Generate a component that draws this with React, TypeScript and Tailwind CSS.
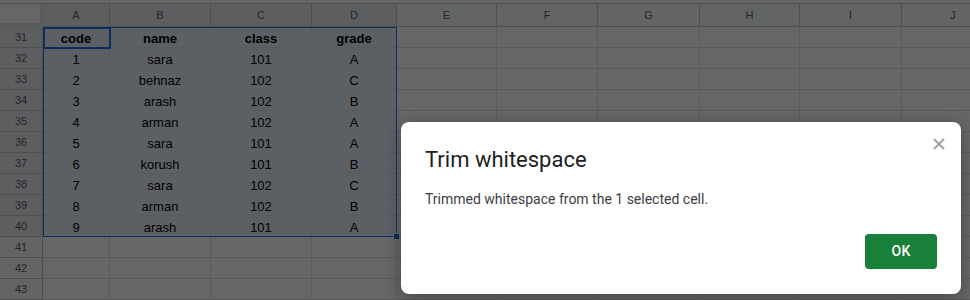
import React from 'react'

const colWidths = ['w-[67px]', 'w-[101px]', 'w-[101px]', 'w-[85px]', 'w-[100px]', 'w-[101px]', 'w-[102px]', 'w-[100px]', 'w-[102px]']
const letters = ['A', 'B', 'C', 'D', 'E', 'F', 'G', 'H', 'I']

const data: string[][] = [
  ['code', 'name', 'class', 'grade'],
  ['1', 'sara', '101', 'A'],
  ['2', 'behnaz', '102', 'C'],
  ['3', 'arash', '102', 'B'],
  ['4', 'arman', '102', 'A'],
  ['5', 'sara', '101', 'A'],
  ['6', 'korush', '101', 'B'],
  ['7', 'sara', '102', 'C'],
  ['8', 'arman', '102', 'B'],
  ['9', 'arash', '101', 'A'],
  ['', '', '', ''],
  ['', '', '', ''],
  ['', '', '', ''],
]

function ColumnHeader() {
  return (
    <div className="flex h-[23px]">
      {/* corner with freeze bars */}
      <div className="w-[43px] shrink-0 flex flex-col">
        <div className="flex flex-1">
          <div className="flex-1 bg-white" />
          <div className="w-[3px] bg-[#e2e3e3]" />
        </div>
        <div className="h-[4px] bg-[#e2e3e3]" />
      </div>
      {letters.map((l, i) => (
        <div
          key={l}
          className={`${colWidths[i]} shrink-0 border-r border-b border-[#c4c7c5] flex items-center justify-center text-[11px] text-[#5f6368] ${i < 4 ? 'bg-[#e8eaed]' : 'bg-[#f8f9fa]'}`}
        >
          {l}
        </div>
      ))}
      <div className="flex-1 border-b border-[#c4c7c5] bg-[#f8f9fa] flex items-center justify-start text-[11px] text-[#5f6368] pl-[48px]">
        J
      </div>
    </div>
  )
}

function Row({ num, cells }: { num: number; cells: string[] }) {
  const selected = num <= 40
  return (
    <div className="flex h-[21px]">
      <div
        className={`w-[43px] shrink-0 border-r border-b border-[#c4c7c5] flex items-center justify-center text-[11px] text-[#5f6368] ${selected ? 'bg-[#e8eaed]' : 'bg-[#f8f9fa]'}`}
      >
        {num}
      </div>
      {colWidths.map((w, i) => (
        <div
          key={i}
          className={`${w} shrink-0 border-r border-b border-[#e2e3e3] flex items-center justify-center pt-[3px] text-[13px] text-black ${selected && i < 4 ? 'bg-[#e7f0fd]' : 'bg-white'} ${num === 31 ? 'font-bold' : ''}`}
        >
          {cells[i] ?? ''}
        </div>
      ))}
      <div className="flex-1 border-b border-[#e2e3e3] bg-white" />
    </div>
  )
}

export default function App() {
  return (
    <div className="relative w-[970px] h-[300px] overflow-hidden bg-white font-['Liberation_Sans',Arial,sans-serif]">
      <div className="h-[4px] border-b border-[#c4c7c5]" />
      <ColumnHeader />
      {data.map((cells, i) => (
        <Row key={i} num={31 + i} cells={cells} />
      ))}

      {/* selection range A31:D40 */}
      <div className="absolute left-[43px] top-[27px] w-[354px] h-[210px] border border-[#1a73e8]" />
      <div className="absolute left-[43px] top-[27px] w-[68px] h-[22px] border-2 border-[#1a73e8]" />
      <div className="absolute left-[393px] top-[233px] w-[7px] h-[7px] bg-[#1a73e8] border border-white" />

      {/* modal backdrop */}
      <div className="absolute inset-0 bg-black/60" />

      {/* dialog */}
      <div className="absolute left-[401px] top-[122px] w-[560px] h-[172px] bg-white rounded-lg shadow-[0_4px_16px_rgba(0,0,0,0.3)] flex flex-col px-6 pt-[24px] pb-[25px] font-['Roboto',Arial,sans-serif]">
        <button className="absolute right-[16px] top-[16px] text-[#a0a4a8]" aria-label="Close">
          <svg width="12" height="12" viewBox="0 0 12 12" className="block">
            <path d="M1 1 L11 11 M11 1 L1 11" stroke="currentColor" strokeWidth="2" />
          </svg>
        </button>
        <h2 className="text-[22px] leading-[28px] text-[#202124]">Trim whitespace</h2>
        <p className="mt-[15px] text-[14px] leading-[20px] text-[#3c4043]">
          Trimmed whitespace from the 1 selected cell.
        </p>
        <div className="mt-auto flex justify-end">
          <button className="w-[72px] h-[35px] rounded bg-[#188038] text-white text-[14px] font-medium tracking-[0.25px]">
            OK
          </button>
        </div>
      </div>
    </div>
  )
}
